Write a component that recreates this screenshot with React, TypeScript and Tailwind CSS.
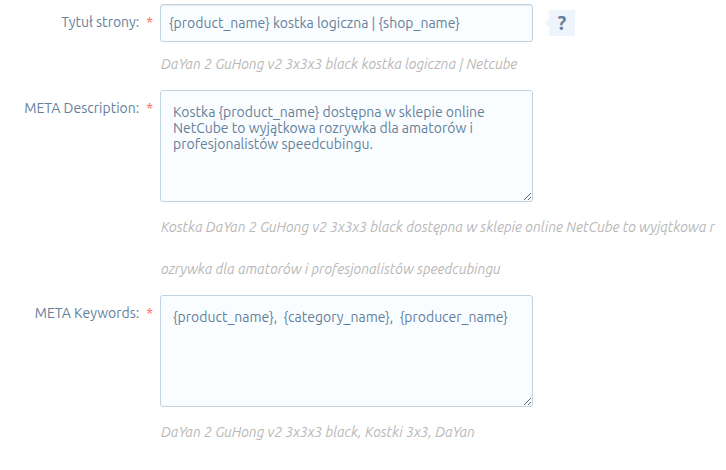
import { useState, type ReactNode } from 'react';
import clsx from 'clsx';

const control =
  'block w-full rounded-[3px] border border-[#c1d2e1] bg-[#fafdff] text-sm text-[#64809b] outline-none';

function Field({ id, label, children, hint }: {
  id: string;
  label: string;
  children: ReactNode;
  hint: ReactNode;
}) {
  return (
    <div className="grid grid-cols-[153px_minmax(0,1fr)] gap-x-[7px]">
      <label htmlFor={id} className="flex h-9 items-center justify-end gap-[7px] whitespace-nowrap text-sm text-[#64809b]">
        {label}
        <span className="font-medium text-[#ff7b70]">*</span>
      </label>
      <div className="min-w-0">
        {children}
        <p className="whitespace-nowrap pl-px text-sm italic leading-[42px] text-[#b8b8b8]">{hint}</p>
      </div>
    </div>
  );
}

export default function App() {
  const [title, setTitle] = useState('{product_name} kostka logiczna | {shop_name}');
  const [description, setDescription] = useState(
    'Kostka {product_name} dostępna w sklepie online\nNetCube to wyjątkowa rozrywka dla amatorów i\nprofesjonalistów speedcubingu.'
  );
  const [keywords, setKeywords] = useState('{product_name},  {category_name},  {producer_name}');

  return (
    <form className="flex flex-col gap-[5px] overflow-hidden bg-white pt-1 font-[Ubuntu,'Noto_Sans',sans-serif]">
      <Field id="title" label="Tytuł strony:" hint="DaYan 2 GuHong v2 3x3x3 black kostka logiczna | Netcube">
        <div className="mb-px flex items-center">
          <div className="w-full max-w-[373px]">
            <input
              id="title"
              value={title}
              onChange={e => setTitle(e.target.value)}
              className={clsx(control, 'h-[38px] px-2 shadow-[inset_0_1px_1px_#e3ebf2]')}
            />
          </div>
          <button type="button" aria-label="?" className="ml-3 flex items-center">
            <svg viewBox="0 0 4 8" className="h-2 w-1" fill="#edf4fb">
              <path d="M4 0v8L0 4z" />
            </svg>
            <span className="flex h-[26px] w-[26px] items-center justify-center bg-[#edf4fb] text-xl font-bold text-[#64809b]">?</span>
          </button>
        </div>
      </Field>

      <Field
        id="description"
        label="META Description:"
        hint={
          <>
            Kostka DaYan 2 GuHong v2 3x3x3 black dostępna w sklepie online NetCube to wyjątkowa r
            <br />
            ozrywka dla amatorów i profesjonalistów speedcubingu
          </>
        }
      >
        <div className="mb-1 max-w-[373px]">
          <textarea
            id="description"
            value={description}
            onChange={e => setDescription(e.target.value)}
            className={clsx(control, 'h-28 px-3 py-[13px] leading-4')}
          />
        </div>
      </Field>

      <Field id="keywords" label="META Keywords:" hint="DaYan 2 GuHong v2 3x3x3 black, Kostki 3x3, DaYan">
        <div className="mb-1 max-w-[373px]">
          <textarea
            id="keywords"
            value={keywords}
            onChange={e => setKeywords(e.target.value)}
            className={clsx(control, 'h-28 px-3 py-[13px] leading-4')}
          />
        </div>
      </Field>
    </form>
  );
}
